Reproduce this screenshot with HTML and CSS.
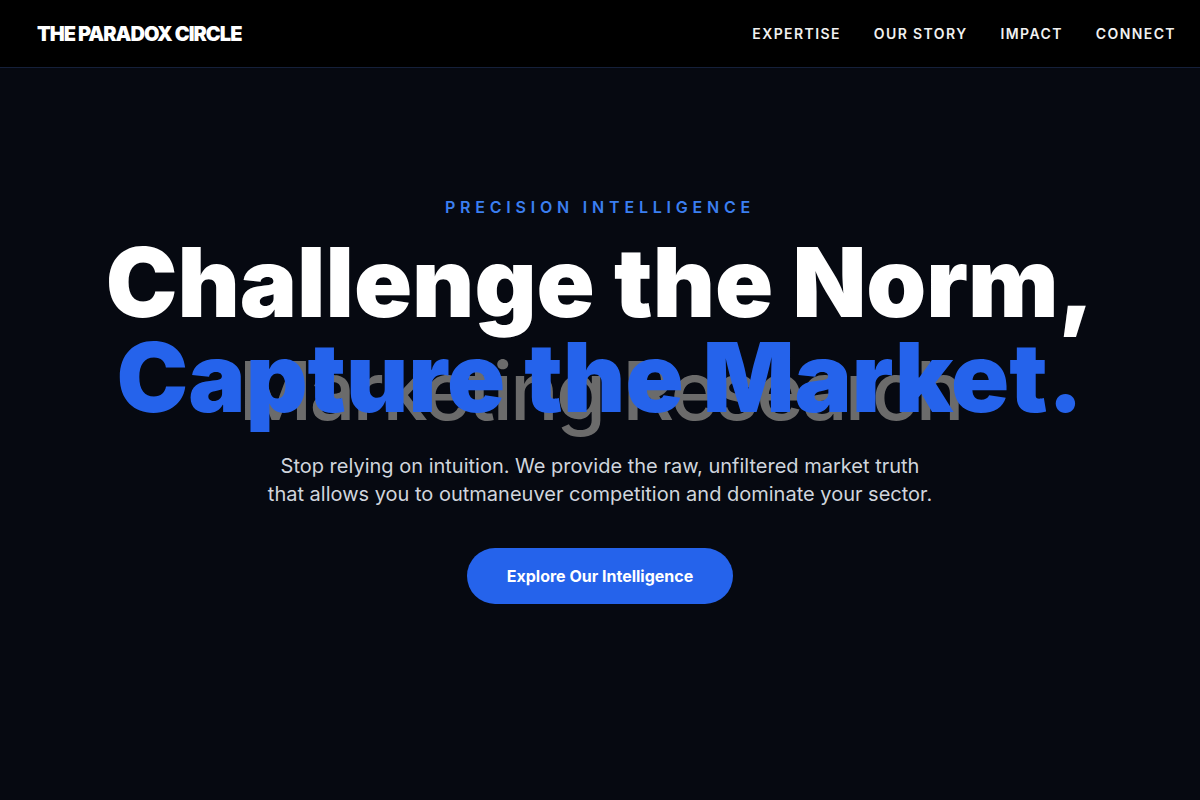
FILE: index.html
```html
<!DOCTYPE html>
<html lang="en">
<head>
<meta charset="utf-8">
<title>The Paradox Circle</title>
<link rel="stylesheet" href="styles.css">
</head>
<body>
<header class="site-header">
  <a class="logo" href="#">THE PARADOX CIRCLE</a>
  <nav class="nav">
    <a href="#">EXPERTISE</a>
    <a href="#">OUR STORY</a>
    <a href="#">IMPACT</a>
    <a href="#">CONNECT</a>
  </nav>
</header>
<main class="hero">
  <p class="eyebrow">PRECISION INTELLIGENCE</p>
  <h1 class="headline">
    <span class="line-white">Challenge the Norm,</span>
    <span class="line-blue">
      <span class="ghost">Marketing Research</span>
      <span class="blue">Capture the Market.</span>
    </span>
  </h1>
  <p class="lead">Stop relying on intuition. We provide the raw, unfiltered market truth<br>that allows you to outmaneuver competition and dominate your sector.</p>
  <a class="cta" href="#">Explore Our Intelligence</a>
</main>
</body>
</html>
```
FILE: styles.css
```css
* { box-sizing: border-box; }
html, body { margin: 0; padding: 0; }
body {
  background: #060911;
  color: #fff;
  font-family: Inter, "Noto Sans", sans-serif;
  min-height: 100vh;
}
a { color: inherit; text-decoration: none; }
.site-header {
  height: 68px;
  background: #000;
  border-bottom: 1px solid #15203a;
  display: flex;
  align-items: center;
  justify-content: space-between;
  padding: 0 24px 0 37px;
}
.logo {
  font-weight: 900;
  font-size: 20px;
  letter-spacing: -0.05em;
  color: #fff;
}
.nav {
  display: flex;
  gap: 33px;
}
.nav a {
  font-size: 14px;
  font-weight: 600;
  letter-spacing: 0.1em;
  color: #f1f1f1;
}
.hero {
  display: flex;
  flex-direction: column;
  align-items: center;
  text-align: center;
  padding-top: 129px;
}
.eyebrow {
  margin: 0;
  font-size: 16px;
  font-weight: 600;
  letter-spacing: 0.3em;
  color: #3b7ff0;
  line-height: 20px;
}
.headline {
  margin: 18px 0 0;
  font-size: 96px;
  font-weight: 900;
  letter-spacing: 0;
  line-height: 95px;
  display: flex;
  flex-direction: column;
  align-items: center;
}
.line-white { color: #fff; }
.line-blue {
  position: relative;
  display: block;
}
.ghost {
  position: absolute;
  left: 50%;
  top: 14px;
  transform: translateX(-50%);
  white-space: nowrap;
  font-size: 81px;
  font-weight: 500;
  letter-spacing: -0.035em;
  color: #6b6b6b;
}
.blue {
  position: relative;
  color: #2563eb;
}
.lead {
  margin: 27px 0 0;
  font-size: 20px;
  line-height: 28px;
  color: #d0d5dd;
}
.cta {
  margin-top: 40px;
  display: inline-flex;
  align-items: center;
  justify-content: center;
  width: 266px;
  height: 56px;
  border-radius: 28px;
  background: #2563eb;
  color: #fff;
  font-weight: 700;
  font-size: 16px;
}
```
